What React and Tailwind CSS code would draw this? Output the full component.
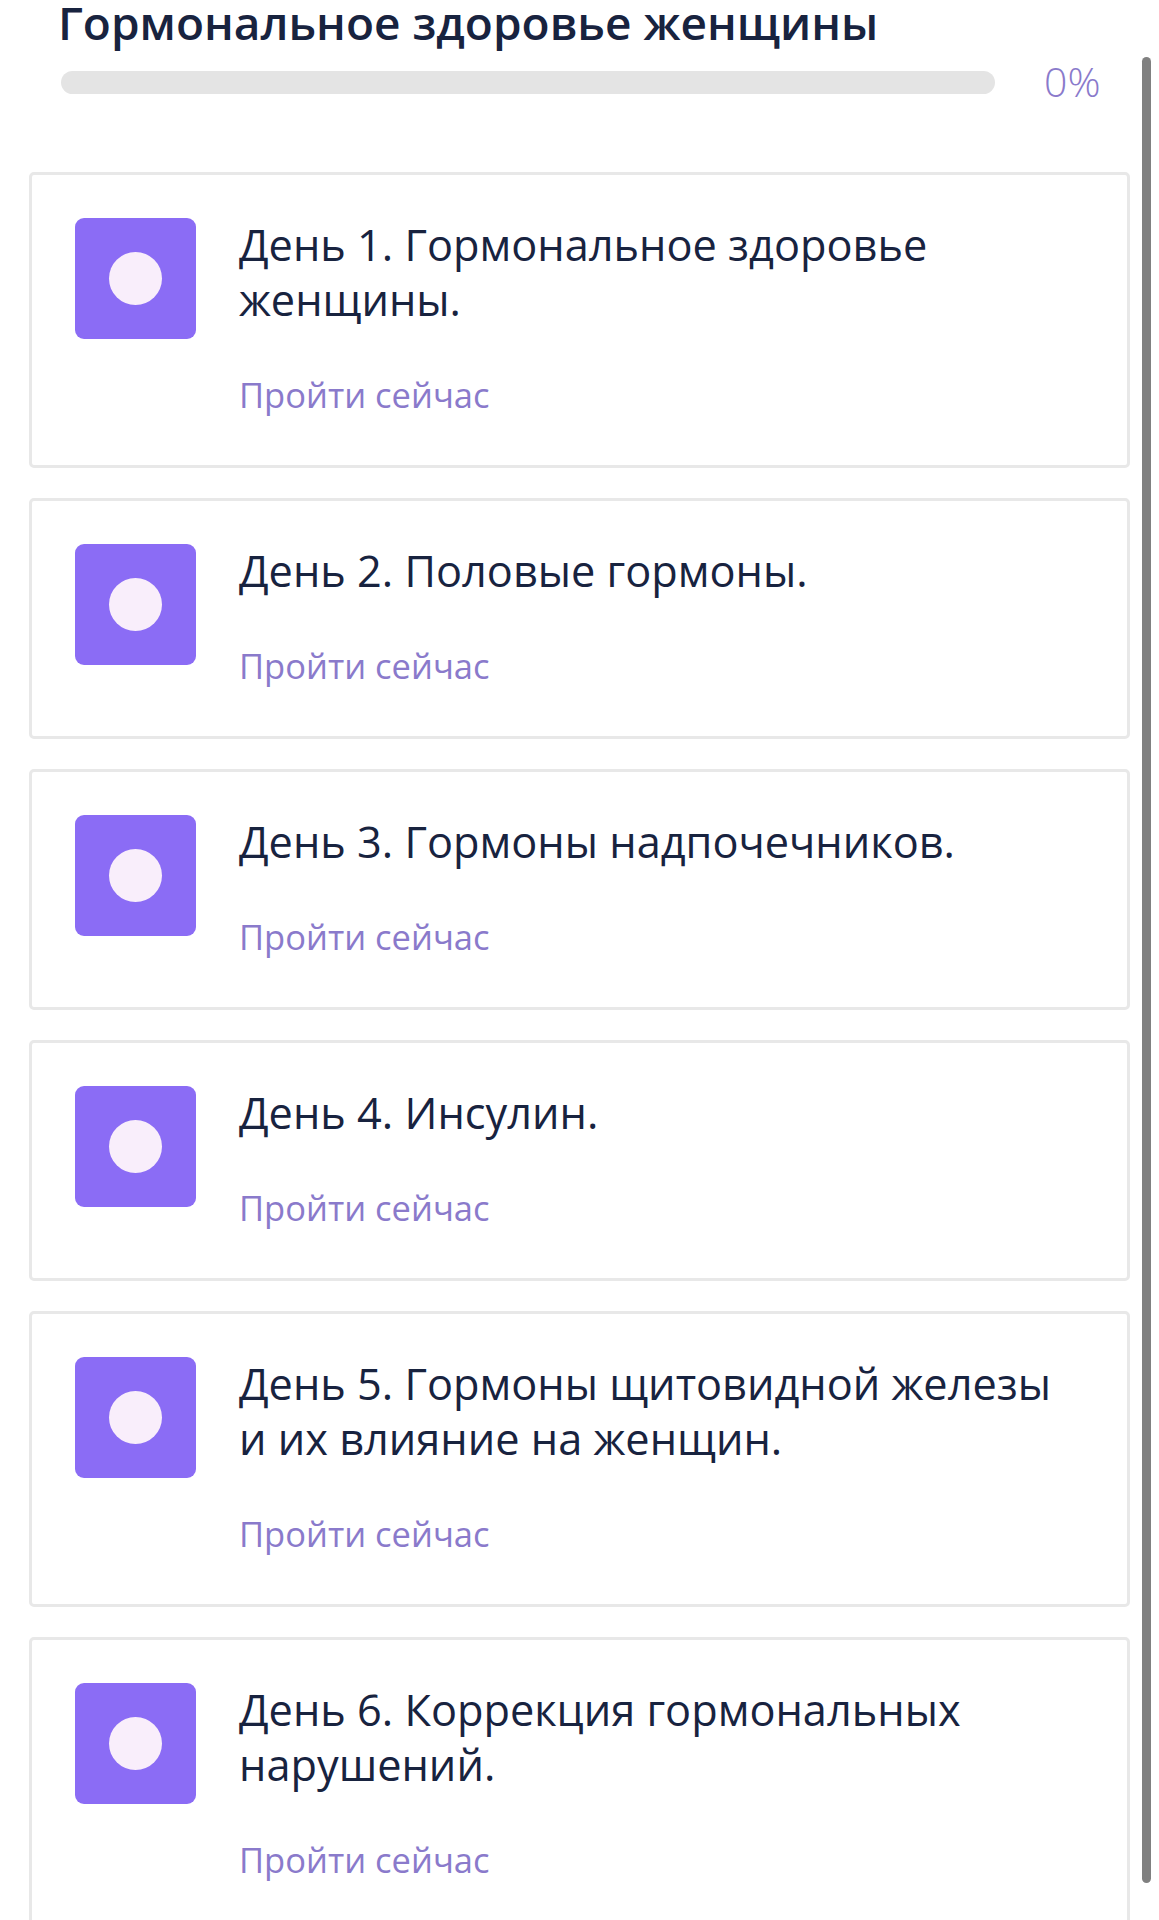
const days = [
  "День 1. Гормональное здоровье женщины.",
  "День 2. Половые гормоны.",
  "День 3. Гормоны надпочечников.",
  "День 4. Инсулин.",
  "День 5. Гормоны щитовидной железы и их влияние на женщин.",
  "День 6. Коррекция гормональных нарушений.",
];

function DayCard({ title }) {
  return (
    <div className="flex shrink-0 gap-[43px] rounded-[5px] border-[3px] border-[#e8e8e8] bg-white pt-[42px] pr-[60px] pb-[45px] pl-[43px]">
      <div className="mt-px flex h-[121px] w-[121px] shrink-0 items-center justify-center rounded-[9px] bg-[#8b6cf5]">
        <div className="h-[53px] w-[53px] rounded-full bg-[#f9eefb]" />
      </div>
      <div>
        <div className="text-[43.3px] leading-[55px] text-[#18233f]">{title}</div>
        <div className="mt-[43px] text-[34.5px] leading-[50px] text-[#8a7acb]">Пройти сейчас</div>
      </div>
    </div>
  );
}

export default function App() {
  return (
    <div className="relative h-[1920px] overflow-hidden bg-white font-['Open_Sans',sans-serif]">
      <div className="pl-[58px]">
        <h1 className="h-[46px] -translate-y-px text-[46px] leading-[46px] font-semibold text-[#18233f]">
          Гормональное здоровье женщины
        </h1>
        <div className="mt-[25px] flex items-center">
          <div className="ml-[3px] h-[23px] w-[934px] rounded-full bg-[#e4e4e4]" />
          <div className="ml-[49px] -translate-y-px text-[41px] leading-[23px] font-light text-[#8a7acb]">0%</div>
        </div>
      </div>
      <div className="mt-[78px] ml-[29px] flex w-[1101px] flex-col gap-[30px]">
        {days.map((d) => (
          <DayCard key={d} title={d} />
        ))}
      </div>
      <div className="absolute top-[57px] left-[1142px] h-[1826px] w-[9px] rounded-full bg-[#808080]" />
    </div>
  );
}
